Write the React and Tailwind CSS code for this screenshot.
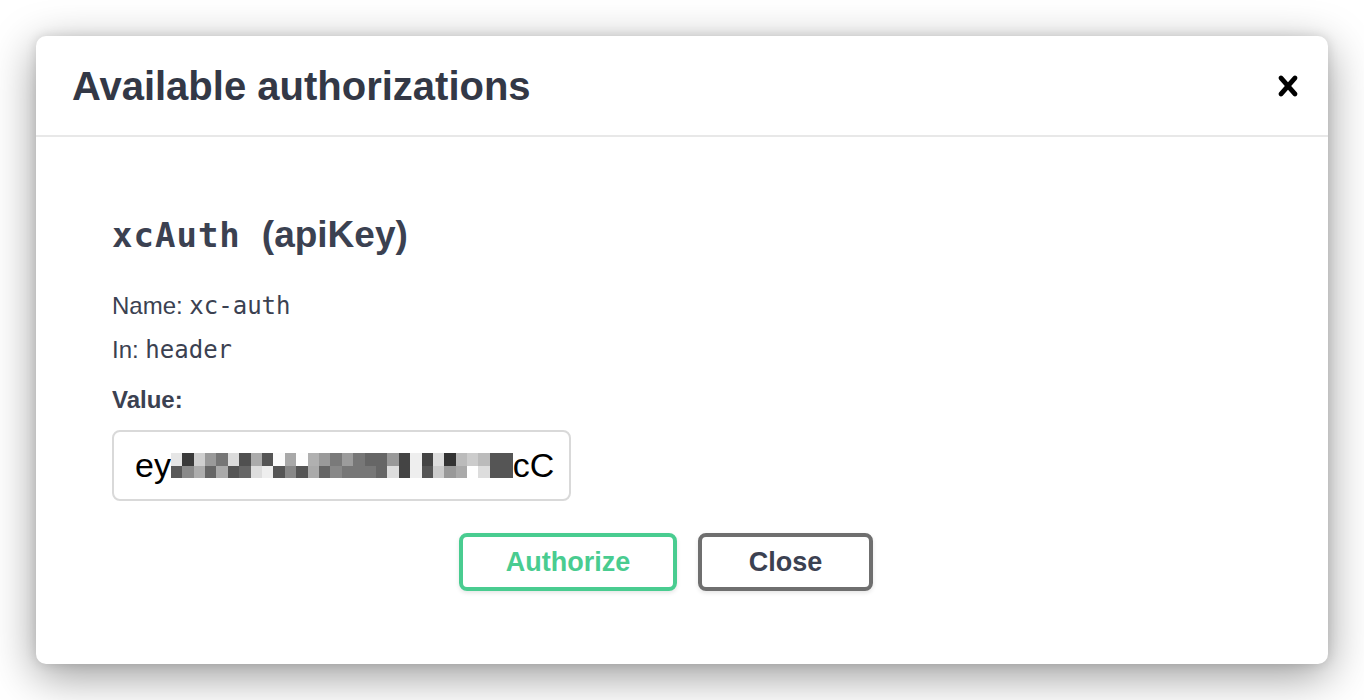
import React from "react";

const row1 = [
  "bg-[#e6e6e6]", "bg-[#3a3a3a]", "bg-[#cfcfcf]", "bg-[#9a9a9a]", "bg-[#767676]", "bg-[#dcdcdc]",
  "bg-[#505050]", "bg-[#ababab]", "bg-[#555555]", "bg-[#fbfbfb]", "bg-[#a8a8a8]", "bg-[#fdfdfd]",
  "bg-[#b0b0b0]", "bg-[#9a9a9a]", "bg-[#7a7a7a]", "bg-[#9c9c9c]", "bg-[#777777]", "bg-[#666666]",
  "bg-[#666666]", "bg-[#999999]", "bg-[#444444]", "bg-[#eeeeee]", "bg-[#444444]", "bg-[#dddddd]",
  "bg-[#333333]", "bg-[#bbbbbb]", "bg-[#cccccc]", "bg-[#bbbbbb]", "bg-[#555555]", "bg-[#555555]",
];
const row2 = [
  "bg-[#595959]", "bg-[#8a8a8a]", "bg-[#adadad]", "bg-[#666666]", "bg-[#aaaaaa]", "bg-[#555555]",
  "bg-[#666666]", "bg-[#dddddd]", "bg-[#eeeeee]", "bg-[#555555]", "bg-[#888888]", "bg-[#555555]",
  "bg-[#aaaaaa]", "bg-[#666666]", "bg-[#888888]", "bg-[#777777]", "bg-[#777777]", "bg-[#777777]",
  "bg-[#666666]", "bg-[#dddddd]", "bg-[#444444]", "bg-[#eeeeee]", "bg-[#555555]", "bg-[#cccccc]",
  "bg-[#999999]", "bg-[#aaaaaa]", "bg-[#ffffff]", "bg-[#dddddd]", "bg-[#555555]", "bg-[#555555]",
];

const sans = "font-['Liberation_Sans',Arial,sans-serif]";
const mono = "font-['DejaVu_Sans_Mono',monospace]";

function CloseIcon() {
  return (
    <svg width="40" height="40" viewBox="0 0 20 20" aria-hidden="true">
      <path
        fill="#000"
        d="M14.348 14.849c-.469.469-1.229.469-1.697 0L10 11.819l-2.651 3.029c-.469.469-1.229.469-1.697 0-.469-.469-.469-1.229 0-1.697l2.758-3.15-2.759-3.152c-.469-.469-.469-1.228 0-1.697.469-.469 1.228-.469 1.697 0L10 8.183l2.651-3.031c.469-.469 1.228-.469 1.697 0 .469.469.469 1.229 0 1.697l-2.758 3.152 2.758 3.15c.469.469.469 1.229 0 1.698z"
      />
    </svg>
  );
}

export default function App() {
  return (
    <div className={`w-full h-[700px] bg-white p-[36px] ${sans}`}>
      <div className="w-[1292px] h-[628px] bg-white rounded-[10px] shadow-[0_12px_45px_rgba(0,0,0,0.4),0_0_12px_rgba(0,0,0,0.12)] flex flex-col">
        <div className="h-[101px] flex items-center justify-between pl-[36px] pr-[20px] border-b-2 border-[#e8e8e8]">
          <h3 className="text-[40px] font-bold text-[#333846]">Available authorizations</h3>
          <button className="w-[40px] h-[40px] flex items-center justify-center">
            <CloseIcon />
          </button>
        </div>
        <div className="pl-[76px] pr-[108px] pt-[78px] flex flex-col text-[#3b4151]">
          <h4 className="flex items-baseline leading-[40px]">
            <span className={`${mono} text-[34px] font-bold tracking-[1px]`}>xcAuth</span>
            <span className="ml-[21px] text-[37px] font-bold">(apiKey)</span>
          </h4>
          <p className="mt-[29px] text-[24px] leading-[44px]">
            Name: <span className={`${mono} text-[24px]`}>xc-auth</span>
          </p>
          <p className="text-[24px] leading-[44px]">
            In: <span className={`${mono} text-[24px]`}>header</span>
          </p>
          <label className="mt-[6px] text-[24px] font-bold leading-[44px]">Value:</label>
          <div className="mt-[8px] w-[459px] h-[71px] border-2 border-[#d9d9d9] rounded-[8px] flex items-center pl-[21px] text-black text-[34px]">
            <span>ey</span>
            <div className="flex flex-col">
              <div className="flex">
                {row1.map((c, i) => (
                  <div key={i} className={`w-[11.4px] h-[12.5px] ${c}`} />
                ))}
              </div>
              <div className="flex">
                {row2.map((c, i) => (
                  <div key={i} className={`w-[11.4px] h-[12.5px] ${c}`} />
                ))}
              </div>
            </div>
            <span>cC</span>
          </div>
          <div className="mt-[32px] flex justify-center">
            <button className="w-[218px] h-[58px] border-4 border-[#49cc90] rounded-[8px] text-[#49cc90] text-[27px] font-bold shadow-[0_2px_4px_rgba(0,0,0,0.1)] mr-[21px]">
              Authorize
            </button>
            <button className="w-[175px] h-[58px] border-4 border-[#6f6f6f] rounded-[8px] text-[#3b4151] text-[27px] font-bold shadow-[0_2px_4px_rgba(0,0,0,0.1)]">
              Close
            </button>
          </div>
        </div>
      </div>
    </div>
  );
}
